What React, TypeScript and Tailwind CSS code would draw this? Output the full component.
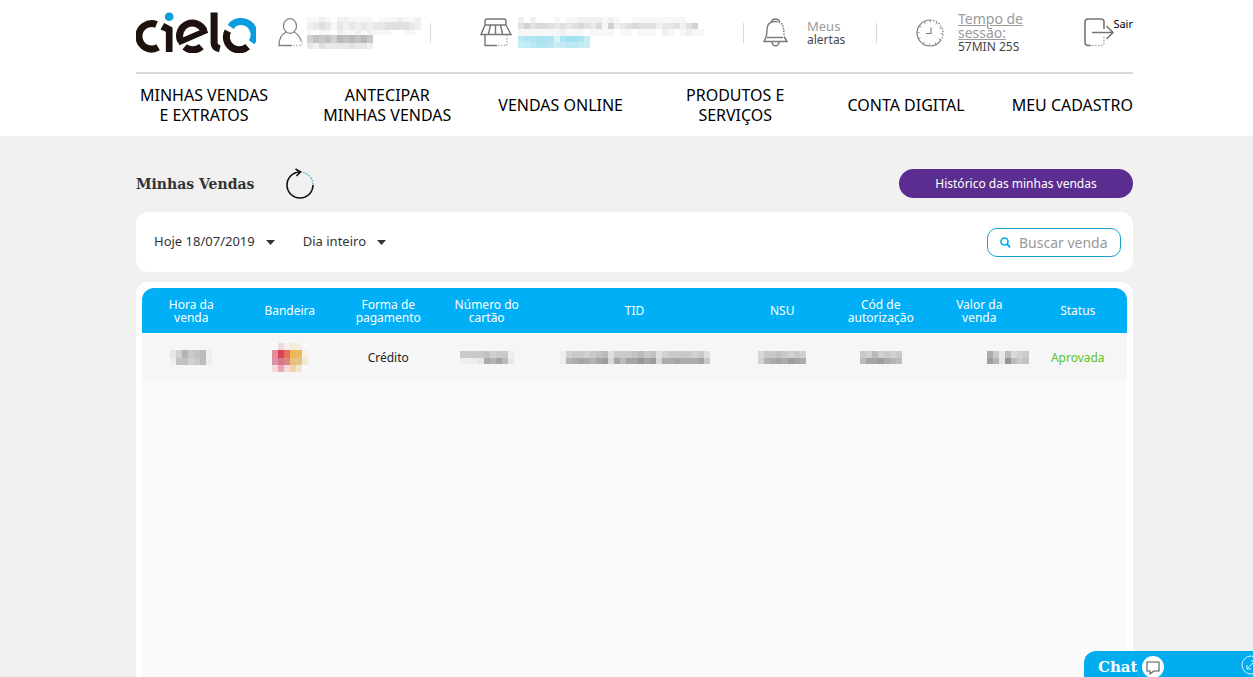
import React from "react";

type MosaicProps = {
  rows: string[];
  heights: number[];
  cell?: number;
  color?: string;
  className?: string;
};

/* Each hex digit is the darkness of one block of concealed text. */
function Mosaic({ rows, heights, cell = 6, color = "#000000", className = "" }: MosaicProps) {
  const width = Math.max(...rows.map((r) => r.length)) * cell;
  const total = heights.reduce((a, b) => a + b, 0);
  let y = 0;
  return (
    <svg
      width={width}
      height={total}
      viewBox={`0 0 ${width} ${total}`}
      shapeRendering="crispEdges"
      aria-hidden="true"
      className={`shrink-0 ${className}`}
    >
      {rows.map((row, r) => {
        const top = y;
        y += heights[r];
        return row
          .split("")
          .map((d, c) => (
            <rect
              key={`${r}-${c}`}
              x={c * cell}
              y={top}
              width={cell}
              height={heights[r]}
              fill={color}
              opacity={parseInt(d, 16) * 0.03}
            />
          ));
      })}
    </svg>
  );
}

function Logo() {
  return (
    <svg width="120" height="41" viewBox="18 38 358 122" role="img" aria-label="cielo">
      <g fill="none" stroke="#1d120d" strokeWidth="21">
        <path d="M79 75 A38 38 0 1 0 84 143" />
        <path d="M151 124 A38 38 0 0 1 221 94" />
        <path d="M144 129 L230 92" strokeWidth="17" />
        <path d="M163 142 A38 38 0 0 0 213 141" />
        <path d="M251 39 V130 Q251 144 268 148" />
        <path d="M292 95 A38 38 0 0 0 351 141" />
      </g>
      <path d="M91 90 L102 71 L127 84 V157 H107 V97 Z" fill="#1d120d" />
      <circle cx="117" cy="52" r="13" fill="#0a9ddd" />
      <path d="M300 82 A38 38 0 0 1 363 128" fill="none" stroke="#0a9ddd" strokeWidth="21" />
    </svg>
  );
}

function UserIcon() {
  return (
    <svg width="25" height="29" viewBox="0 0 25 29" fill="none" stroke="#858585" strokeWidth="1.3" aria-hidden="true">
      <ellipse cx="12" cy="8" rx="6.5" ry="7.3" />
      <path d="M8 14 C3 16.500 1 20 1 27.500 H14" />
      <path d="M16 14 C20 16 22 19 23 23" />
      <path d="M15 27.500 H24 V23" strokeDasharray="1.500 1.500" stroke="#bbbbbb" />
    </svg>
  );
}

function StoreIcon() {
  return (
    <svg width="32" height="29" viewBox="0 0 32 29" fill="none" stroke="#757575" strokeWidth="1.4" aria-hidden="true">
      <path d="M5 7 V3 Q5 1 7 1 H24 Q26 1 26 3 V7 Z" />
      <path d="M5 7 L1 16.500 H31 L26 7" />
      <path d="M10.500 7 L8.500 16 M15.500 7 V16 M20.500 7 L22.500 16" />
      <path d="M5 17 V27.500 H17" />
      <path d="M18 27.500 H27 V17" strokeDasharray="1.500 1.500" stroke="#c2a9ad" />
    </svg>
  );
}

function BellIcon() {
  return (
    <svg width="25" height="29" viewBox="0 0 25 29" fill="none" stroke="#7c7c7c" strokeWidth="1.5" aria-hidden="true">
      <path d="M8.500 4 C9 0 16 0 16.500 4" />
      <path d="M13 3.500 C6 3 4 7 4 12 C4 19 3 20 1 23.500 H24 L21 18.500" />
      <path d="M13 3.500 C19 4 21 7 21 18" strokeDasharray="1.500 1.200" />
      <path d="M4 19.500 H20" />
      <path d="M9 24 C9.500 29 15.500 29 16 24" />
    </svg>
  );
}

function ClockIcon() {
  return (
    <svg width="28" height="28" viewBox="0 0 28 28" fill="none" stroke="#7c7c7c" aria-hidden="true">
      <path d="M14 1 A13 13 0 1 0 25 21" strokeWidth="1.2" />
      <path d="M14 1 A13 13 0 0 1 25 21" strokeWidth="1.2" strokeDasharray="1.500 1.500" />
      <circle cx="14" cy="14" r="11.500" strokeWidth="2" strokeDasharray="0.800 5.221" />
      <path d="M15 8.500 V14.500 H10" strokeWidth="1.100" />
    </svg>
  );
}

function ExitIcon() {
  return (
    <svg width="31" height="29" viewBox="0 0 31 29" fill="none" stroke="#757575" strokeWidth="1.6" aria-hidden="true">
      <path d="M20 11 V4 Q20 1 17 1 H4 Q1 1 1 4 V24 Q1 27.500 4 27.500 H7" />
      <path d="M8 27.500 H17 Q20 27.500 20 24 V18" strokeDasharray="1.500 1.500" stroke="#aaaaaa" />
      <path d="M8 14.500 H29 M22.500 8 L29 14.500 L22.500 21" />
    </svg>
  );
}

function RefreshIcon() {
  return (
    <svg width="28" height="31" viewBox="0 0 28 31" fill="none" aria-hidden="true">
      <path d="M14 4 A13 13 0 1 0 27 17" stroke="#111111" strokeWidth="1.600" />
      <path d="M14 4 A13 13 0 0 1 27 17" stroke="#7fb2c4" strokeWidth="1.300" strokeDasharray="2 1" />
      <path d="M9.500 1 L14.500 4 L10.500 8" stroke="#111111" strokeWidth="1.600" />
    </svg>
  );
}

function FilterSelect({ id, label, option }: { id: string; label: string; option: string }) {
  return (
    <div className="relative flex items-center">
      <label htmlFor={id} className="sr-only">
        {label}
      </label>
      <select
        id={id}
        className="field-sizing-content h-7 cursor-pointer appearance-none bg-transparent pr-5 text-[13px] text-[#333333]"
      >
        <option>{option}</option>
      </select>
      <svg width="9" height="5" viewBox="0 0 9 5" aria-hidden="true" className="pointer-events-none absolute right-0">
        <path d="M0 0 H9 L4.500 5 Z" fill="#333333" />
      </svg>
    </div>
  );
}

const columns = [
  { title: "Hora da venda", width: "w-1/10" },
  { title: "Bandeira", width: "w-1/10" },
  { title: "Forma de pagamento", width: "w-1/10" },
  { title: "Número do cartão", width: "w-1/10" },
  { title: "TID", width: "w-1/5" },
  { title: "NSU", width: "w-1/10" },
  { title: "Cód de autorização", width: "w-1/10" },
  { title: "Valor da venda", width: "w-1/10" },
  { title: "Status", width: "w-1/10" },
];

const menu = [
  { lines: ["MINHAS VENDAS", "E EXTRATOS"], box: "pl-1 pr-2" },
  { lines: ["ANTECIPAR", "MINHAS VENDAS"], box: "" },
  { lines: ["VENDAS ONLINE"], box: "" },
  { lines: ["PRODUTOS E", "SERVIÇOS"], box: "pl-4 pr-2" },
  { lines: ["CONTA DIGITAL"], box: "pl-2" },
  { lines: ["MEU CADASTRO"], box: "" },
];

const brand = [
  ["#f8f8f8", "#f0d9dc", "#f7edef", "#f6eddc", "#f6f0e0", "#f8f8f8"],
  ["#e2909c", "#dc4257", "#e5715f", "#efb458", "#efb961", "#f7f1e5"],
  ["#da93a6", "#d8788d", "#de8481", "#e5c27c", "#e4c482", "#f4ead4"],
  ["#f2dce1", "#eda3ae", "#f1dadd", "#f2d3a8", "#f3e5ca", "#f8f8f8"],
];

function BrandMosaic() {
  const tops = [0, 7, 15, 22, 29];
  return (
    <svg width="36" height="29" viewBox="0 0 36 29" shapeRendering="crispEdges" aria-hidden="true" className="mx-auto">
      {brand.map((row, r) =>
        row.map((fill, c) => (
          <rect key={`${r}-${c}`} x={c * 6} y={tops[r]} width="6" height={tops[r + 1] - tops[r]} fill={fill} />
        ))
      )}
    </svg>
  );
}

export default function App() {
  return (
    <div className="flex min-h-screen flex-col bg-[#f1f1f1] font-['Noto_Sans',sans-serif] text-[#333333]">
      <header className="bg-white pr-[120px] pl-[136px]">
        <div className="grid h-[74px] grid-cols-[142fr_153fr_313fr_133fr_206fr_50fr] items-center border-b-2 border-[#d9d9d9] pb-[7px]">
          <a href="#inicio">
            <Logo />
          </a>
          <div className="flex h-5 items-center gap-1 border-r border-[#d9d9d9]">
            <UserIcon />
            <Mosaic
              rows={["1121022111101112112", "2343132323233444432", "1011021121211100110", "6878698989700000000", "3243333433200000000"]}
              heights={[5, 8, 5, 8, 6]}
            />
          </div>
          <div className="flex h-5 items-center border-r border-[#d9d9d9] pl-[49px]">
            <StoreIcon />
            <div className="ml-1.5 flex flex-col">
              <Mosaic
                rows={["20200010112222121001111111110000", "46455434345435162345444233424600", "11111112111011110110111021012110"]}
                heights={[6, 6, 7]}
              />
              <Mosaic rows={["9aabba5bccb7", "789aa9789987"]} heights={[6, 6]} color="#00aad2" />
            </div>
          </div>
          <a href="#alertas" className="flex h-5 items-center gap-[19px] border-r border-[#d9d9d9] pl-[19px]">
            <BellIcon />
            <span className="text-[13px] leading-3.5">
              <span className="block text-[#9b9b9b]">Meus</span>
              <span className="block text-[12px] text-[#444444]">alertas</span>
            </span>
          </a>
          <div className="flex h-5 items-center gap-3.5 pl-[39px]">
            <ClockIcon />
            <div className="leading-3.5">
              <a href="#sessao" className="block text-[14px] leading-3.5 text-[#9b9b9b] underline">
                Tempo de
                <br />
                sessão:
              </a>
              <span className="block text-[12px] text-[#444444]">57MIN 25S</span>
            </div>
          </div>
          <a href="#sair" className="flex items-start justify-end">
            <ExitIcon />
            <span className="-ml-0.5 text-[11px] leading-3 text-black">Sair</span>
          </a>
        </div>
        <nav className="flex h-[62px] items-center justify-between text-center text-base leading-5 text-black">
          {menu.map((item) => (
            <a key={item.lines.join(" ")} href="#menu" className={`whitespace-nowrap ${item.box}`}>
              {item.lines.map((line) => (
                <span key={line} className="block">
                  {line}
                </span>
              ))}
            </a>
          ))}
        </nav>
      </header>

      <main className="flex flex-1 flex-col pt-8 pr-[120px] pl-[136px]">
        <div className="flex items-center">
          <h1 className="font-['DejaVu_Serif',serif] text-[14px] leading-6 font-bold">Minhas Vendas</h1>
          <button type="button" aria-label="Atualizar" className="ml-8">
            <RefreshIcon />
          </button>
          <a
            href="#historico"
            className="ml-auto flex h-[29px] w-[234px] items-center justify-center rounded-full bg-[#5c2d91] text-[12px] text-white"
          >
            Histórico das minhas vendas
          </a>
        </div>

        <form className="mt-[13px] flex h-[60px] items-center gap-7 rounded-xl bg-white pr-3 pl-[18px]">
          <FilterSelect id="periodo" label="Período" option="Hoje 18/07/2019" />
          <FilterSelect id="horario" label="Horário" option="Dia inteiro" />
          <div className="ml-auto flex h-[29px] w-[134px] items-center gap-2 rounded-[10px] border border-[#1b9fd0] pl-3">
            <svg width="11" height="11" viewBox="0 0 11 11" fill="none" stroke="#00aeef" aria-hidden="true" className="shrink-0">
              <circle cx="4.500" cy="4.500" r="3.500" strokeWidth="1.700" />
              <path d="M7 7 L10 10.300" strokeWidth="1.900" />
            </svg>
            <input
              type="text"
              aria-label="Buscar venda"
              placeholder="Buscar venda"
              className="w-full min-w-0 bg-transparent text-[14px] outline-none placeholder:text-[#999999]"
            />
          </div>
        </form>

        <section className="mt-2.5 flex flex-1 flex-col rounded-t-xl bg-white px-1.5 pt-1.5">
          <div className="flex-1 overflow-hidden rounded-t-xl bg-[#fafafa]">
            <table className="w-full table-fixed text-center text-[12px] leading-[13px]">
              <thead>
                <tr className="h-[45px] bg-[#00aff5] text-white">
                  {columns.map((c) => (
                    <th key={c.title} scope="col" className={`px-2.5 font-normal ${c.width}`}>
                      {c.title}
                    </th>
                  ))}
                </tr>
              </thead>
              <tbody>
                <tr className="h-12 bg-[#f6f6f6]">
                  <td>
                    <Mosaic rows={["2596781", "1775681"]} heights={[8, 7]} className="mx-auto" />
                  </td>
                  <td>
                    <BrandMosaic />
                  </td>
                  <td className="text-[#222222]">Crédito</td>
                  <td>
                    <Mosaic rows={["666675661", "1112a9b82"]} heights={[7, 6]} className="mx-auto" />
                  </td>
                  <td>
                    <Mosaic
                      rows={["1566567836667867356666563", "19aba9bc4b8bbdbc4aabaaab6"]}
                      heights={[7, 6]}
                      className="mx-auto"
                    />
                  </td>
                  <td>
                    <Mosaic rows={["46676565", "59abacba"]} heights={[7, 6]} className="mx-auto" />
                  </td>
                  <td>
                    <Mosaic rows={["6585656", "8bbca98"]} heights={[7, 6]} className="mx-auto" />
                  </td>
                  <td>
                    <Mosaic rows={["a628456", "c92d867"]} heights={[7, 6]} className="ml-auto" />
                  </td>
                  <td className="text-[#5cc12f]">Aprovada</td>
                </tr>
              </tbody>
            </table>
          </div>
        </section>
      </main>

      <button
        type="button"
        className="fixed right-0 bottom-0 flex h-[26px] w-[169px] items-center overflow-hidden rounded-tl-xl bg-[#00aeef] pt-1.5 pl-3.5 text-white"
      >
        <span className="font-['DejaVu_Serif',serif] text-[15px] font-bold">Chat</span>
        <svg width="22" height="22" viewBox="0 0 22 22" fill="none" aria-hidden="true" className="ml-1 shrink-0">
          <circle cx="11" cy="11" r="11" fill="#ffffff" />
          <path d="M12 15 H17 V6 H5 V15 H8 V18 L12 15" stroke="#555555" strokeWidth="1.100" />
        </svg>
        <svg width="20" height="20" viewBox="0 0 20 20" fill="none" stroke="#d5f1fc" aria-hidden="true" className="absolute -right-2 bottom-0.5">
          <circle cx="10" cy="10" r="9" />
          <path d="M6 14 L14 6 M10 6 H14 V10 M6 10 V14 H10" />
        </svg>
      </button>
    </div>
  );
}
